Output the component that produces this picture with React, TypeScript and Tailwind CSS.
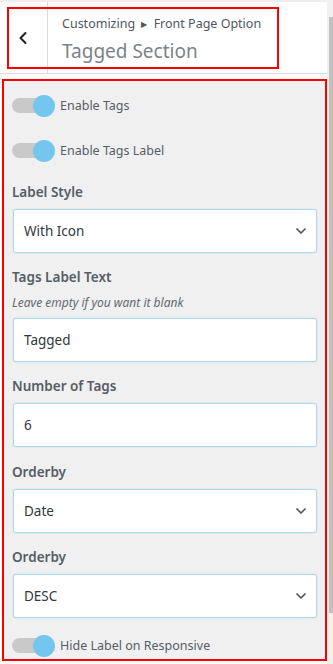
import { ChevronDown, ChevronLeft } from 'lucide-react';

const font = { fontFamily: '"Noto Sans", "Open Sans", Arial, sans-serif' };

function Toggle({ label }: { label: string }) {
  return (
    <div className="flex items-center h-[22px]">
      <div className="relative w-[43px] h-[22px] shrink-0">
        <div className="absolute left-[0px] top-[3px] w-[40px] h-[15px] rounded-full bg-[#c9c9c9]" />
        <div className="absolute right-0 top-0 w-[22px] h-[22px] rounded-full bg-[#74c6ee]" />
      </div>
      <span className="ml-[5px] text-[12.5px] text-[#555d66]">{label}</span>
    </div>
  );
}

function FieldLabel({ children }: { children: string }) {
  return <div className="h-[20px] leading-[20px] text-[13.5px] font-semibold text-[#555d66]">{children}</div>;
}

function SelectBox({ value }: { value: string }) {
  return (
    <div className="mt-[7px] ml-[1px] w-[304px] h-[44px] flex items-center justify-between pl-[10px] pr-[7px] bg-white border border-[#b2d8ec] rounded-[3px] shadow-[0_0_0_0.5px_#cfe6f3]">
      <span className="text-[13.5px] text-[#32373c]">{value}</span>
      <ChevronDown size={16} strokeWidth={2.6} className="text-[#555]" />
    </div>
  );
}

function TextBox({ value, className = 'mt-[7px]' }: { value: string; className?: string }) {
  return (
    <div className={`${className} ml-[1px] w-[304px] h-[44px] flex items-center pl-[10px] bg-white border border-[#b2d8ec] rounded-[3px] shadow-[0_0_0_0.5px_#cfe6f3]`}>
      <span className="text-[13.5px] text-[#32373c]">{value}</span>
    </div>
  );
}

export default function App() {
  return (
    <div className="w-[333px] h-[664px] flex overflow-hidden bg-white" style={font}>
      <div className="w-[327px] flex flex-col">
        {/* header */}
        <div className="relative h-[74px] flex border-b border-[#dcdcde] border-t-2 border-t-[#eeeeee]">
          <div className="w-[48px] shrink-0 flex items-center justify-center border-r border-[#dcdcde]">
            <ChevronLeft size={20} strokeWidth={2.5} className="text-[#1d2327] -ml-[2px]" />
          </div>
          <div className="pl-[14px] pt-[13px]">
            <div className="text-[12.5px] leading-[18px] text-[#50575e]">
              Customizing <span className="text-[8px] mx-[3px] align-[1px]">▶</span> Front Page Option
            </div>
            <div className="mt-[6px] text-[19px] leading-[24px] text-[#7b8288]">Tagged Section</div>
          </div>
          <div className="absolute left-[7px] top-[5px] w-[272px] h-[62px] border-2 border-[#ff0000]" />
        </div>

        {/* panel */}
        <div className="mt-[5px] mb-[3px] ml-[2px] w-[325px] flex-1 border-2 border-[#ff0000] bg-[#f0f0f0] pl-[8px] pt-[14px]">
          <Toggle label="Enable Tags" />
          <div className="mt-[23px]">
            <Toggle label="Enable Tags Label" />
          </div>

          <div className="mt-[20px]">
            <FieldLabel>Label Style</FieldLabel>
            <SelectBox value="With Icon" />
          </div>

          <div className="mt-[14px]">
            <FieldLabel>Tags Label Text</FieldLabel>
            <div className="mt-[7px] h-[18px] leading-[18px] text-[12px] italic text-[#646970]">
              Leave empty if you want it blank
            </div>
            <TextBox value="Tagged" className="mt-[6px]" />
          </div>

          <div className="mt-[14px]">
            <FieldLabel>Number of Tags</FieldLabel>
            <TextBox value="6" />
          </div>

          <div className="mt-[15px]">
            <FieldLabel>Orderby</FieldLabel>
            <SelectBox value="Date" />
          </div>

          <div className="mt-[14px]">
            <FieldLabel>Orderby</FieldLabel>
            <SelectBox value="DESC" />
          </div>

          <div className="mt-[17px]">
            <Toggle label="Hide Label on Responsive" />
          </div>
        </div>
      </div>

      {/* scrollbar */}
      <div className="w-[6px] bg-[#f1f1f1] flex justify-end">
        <div className="mt-[17px] w-[4px] h-[596px] bg-[#c1c1c1]" />
      </div>
    </div>
  );
}
